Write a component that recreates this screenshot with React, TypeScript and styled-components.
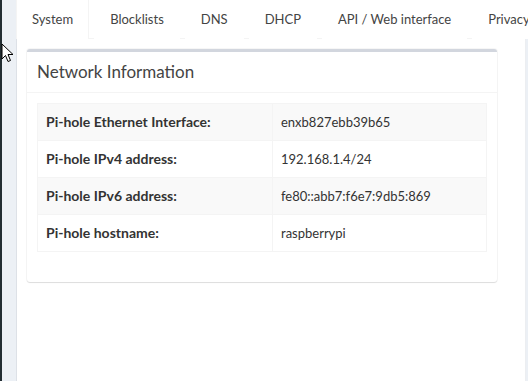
import styled, { createGlobalStyle } from 'styled-components';

const GlobalStyle = createGlobalStyle`
  html, body {
    margin: 0;
    padding: 0;
    height: 100%;
    background: #ecf0f5;
    overflow: hidden;
  }
  body {
    font-family: 'Lato', 'Liberation Sans', sans-serif;
    font-size: 13px;
    color: #333;
  }
`;

const Page = styled.div`
  position: relative;
  display: flex;
  height: 381px;
  width: 528px;
  overflow: hidden;
`;

const SidebarEdge = styled.div`
  width: 2px;
  background: #222d32;
  flex: none;
`;

const Gutter = styled.div`
  width: 14px;
  background: #ecf0f5;
  flex: none;
`;

const TabsPanel = styled.div`
  width: 509px;
  background: #fff;
  border-left: 1px solid #dde1e7;
  display: flex;
  flex-direction: column;
  flex: none;
`;

const TabBar = styled.ul`
  display: flex;
  margin: 0;
  padding: 0;
  list-style: none;
  height: 38px;
  border-bottom: 1px solid #f4f4f4;
  white-space: nowrap;
  background: #fff;
`;

const Tab = styled.li<{ $active?: boolean }>`
  flex: none;
  margin-right: 5px;
  padding: 0 15px;
  line-height: 38px;
  height: 39px;
  border-left: 1px solid ${({ $active }) => ($active ? '#f4f4f4' : 'transparent')};
  border-right: 1px solid ${({ $active }) => ($active ? '#f4f4f4' : 'transparent')};
  margin-left: ${({ $active }) => ($active ? '-1px' : '0')};
  background: #fff;
  color: #444;
  cursor: pointer;
`;

const TabContent = styled.div`
  flex: 1;
  padding: 10px;
  border-right: 1px solid #eceef1;
`;

const Box = styled.div`
  width: 470px;
  box-sizing: border-box;
  border-top: 3px solid #d2d6de;
  border-radius: 3px;
  background: #fff;
  box-shadow: 0 1px 1px rgba(0, 0, 0, 0.1), 0 0 0 1px rgba(0, 0, 0, 0.035);
`;

const BoxHeader = styled.div`
  padding: 10px;
  border-bottom: 1px solid #f4f4f4;
`;

const BoxTitle = styled.h3`
  margin: 0;
  font-size: 17px;
  font-weight: 400;
  line-height: 20px;
  color: #444;
`;

const BoxBody = styled.div`
  padding: 10px;
`;

const InfoTable = styled.table`
  width: 100%;
  border-collapse: collapse;
  border: 1px solid #f4f4f4;
  margin-bottom: 20px;

  tr:nth-child(odd) {
    background: #f9f9f9;
  }

  th,
  td {
    padding: 8px;
    line-height: 20px;
    border: 1px solid #f4f4f4;
    text-align: left;
    vertical-align: top;
  }

  th {
    width: 218px;
    font-size: 14px;
    font-weight: 700;
  }
`;

const Cursor = styled.svg`
  position: absolute;
  left: 1px;
  top: 43px;
  width: 13px;
  height: 20px;
  pointer-events: none;
`;

const rows = [
  ['Pi-hole Ethernet Interface:', 'enxb827ebb39b65'],
  ['Pi-hole IPv4 address:', '192.168.1.4/24'],
  ['Pi-hole IPv6 address:', 'fe80::abb7:f6e7:9db5:869'],
  ['Pi-hole hostname:', 'raspberrypi'],
];

const tabs = ['System', 'Blocklists', 'DNS', 'DHCP', 'API / Web interface', 'Privacy'];

export default function App() {
  return (
    <>
      <GlobalStyle />
      <Page>
        <SidebarEdge />
        <Gutter />
        <TabsPanel>
          <TabBar>
            {tabs.map((t, i) => (
              <Tab key={t} $active={i === 0}>
                {t}
              </Tab>
            ))}
          </TabBar>
          <TabContent>
            <Box>
              <BoxHeader>
                <BoxTitle>Network Information</BoxTitle>
              </BoxHeader>
              <BoxBody>
                <InfoTable>
                  <tbody>
                    {rows.map(([label, value]) => (
                      <tr key={label}>
                        <th>{label}</th>
                        <td>{value}</td>
                      </tr>
                    ))}
                  </tbody>
                </InfoTable>
              </BoxBody>
            </Box>
          </TabContent>
        </TabsPanel>
        <Cursor viewBox="0 0 13 20">
          <path
            d="M1 1 L1 16 L4.5 12.5 L7 18.5 L9.5 17.5 L7 11.5 L12 11.5 Z"
            fill="#fff"
            stroke="#000"
            strokeWidth="1"
            strokeLinejoin="round"
          />
        </Cursor>
      </Page>
    </>
  );
}
